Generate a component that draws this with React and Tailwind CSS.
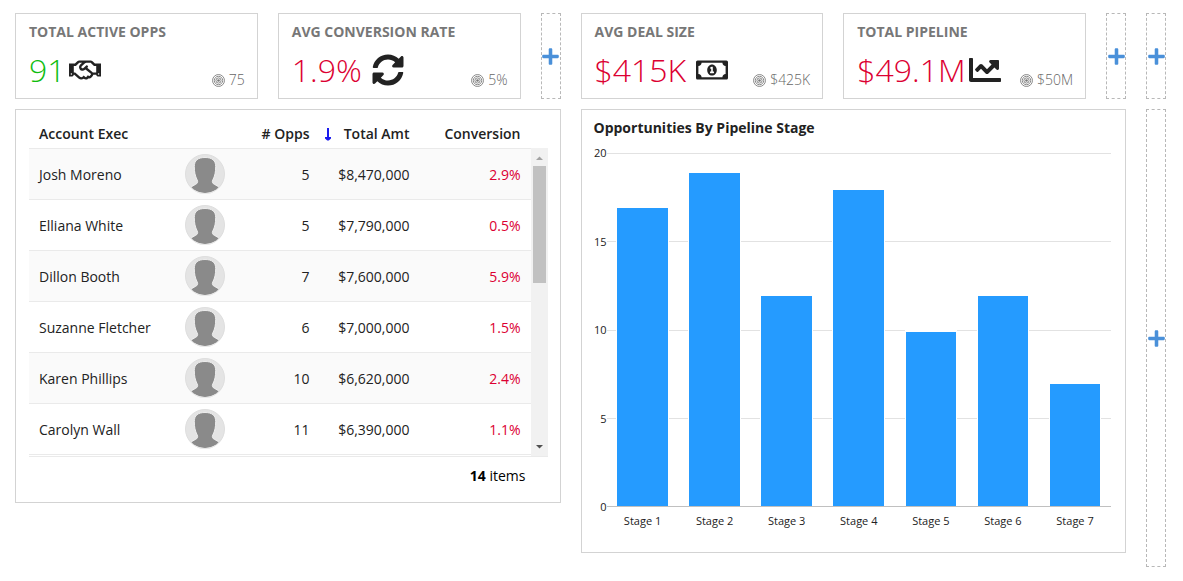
import React from "react";
import {
  FaChartLine,
  FaPlus,
  FaRegHandshake,
  FaRegMoneyBillAlt,
  FaSyncAlt,
} from "react-icons/fa";

const leftKpis = [
  { title: "TOTAL ACTIVE OPPS", value: "91", target: "75", icon: FaRegHandshake, good: true },
  { title: "AVG CONVERSION RATE", value: "1.9%", target: "5%", icon: FaSyncAlt, spaced: true },
];

const rightKpis = [
  { title: "AVG DEAL SIZE", value: "$415K", target: "$425K", icon: FaRegMoneyBillAlt, spaced: true },
  { title: "TOTAL PIPELINE", value: "$49.1M", target: "$50M", icon: FaChartLine },
];

const execs = [
  { name: "Josh Moreno", opps: 5, amount: 8470000, conversion: "2.9%" },
  { name: "Elliana White", opps: 5, amount: 7790000, conversion: "0.5%" },
  { name: "Dillon Booth", opps: 7, amount: 7600000, conversion: "5.9%" },
  { name: "Suzanne Fletcher", opps: 6, amount: 7000000, conversion: "1.5%" },
  { name: "Karen Phillips", opps: 10, amount: 6620000, conversion: "2.4%" },
  { name: "Carolyn Wall", opps: 11, amount: 6390000, conversion: "1.1%" },
];

const stages = [
  { name: "Stage 1", count: 17 },
  { name: "Stage 2", count: 19 },
  { name: "Stage 3", count: 12 },
  { name: "Stage 4", count: 18 },
  { name: "Stage 5", count: 10 },
  { name: "Stage 6", count: 12 },
  { name: "Stage 7", count: 7 },
];

const ticks = [20, 15, 10, 5, 0];
const maxCount = 20;

function TargetIcon() {
  return (
    <svg viewBox="0 0 12 12" className="size-[13px] shrink-0" fill="none" stroke="#777" aria-hidden="true">
      <circle cx="6" cy="6" r="5.5" strokeWidth="0.8" />
      <circle cx="6" cy="6" r="3.9" strokeWidth="0.8" />
      <circle cx="6" cy="6" r="2.4" strokeWidth="0.8" />
      <circle cx="6" cy="6" r="1.2" fill="#777" stroke="none" />
    </svg>
  );
}

function Avatar() {
  return (
    <svg viewBox="0 0 40 40" className="size-10 block" aria-hidden="true">
      <defs>
        <clipPath id="avatar-clip">
          <circle cx="20" cy="20" r="19" />
        </clipPath>
      </defs>
      <circle cx="20" cy="20" r="19.5" fill="#e4e4e4" stroke="#dedede" strokeWidth="1" />
      <g clipPath="url(#avatar-clip)">
        <path
          d="M20 3.500c-7.200 0-10.700 3-10.700 9 0 5.500.8 9.500 2.900 13.500 1 2 .3 3.400-1.400 4.200L6 33l4 8h20l4-8-4.800-2.800c-1.700-.8-2.400-2.200-1.400-4.200 2.100-4 2.900-8 2.900-13.500 0-6-3.500-9-10.700-9z"
          fill="#8a8a8a"
          stroke="#eeeeee"
          strokeWidth="1"
        />
      </g>
      <path d="M9 36.300a19.500 19.500 0 0 0 22 0" fill="none" stroke="#e9e9e9" strokeWidth="1" />
    </svg>
  );
}

function KpiCard({ title, value, target, icon: Icon, good, spaced }) {
  return (
    <section className="flex-1 min-w-0 h-[86px] border border-[#d3d3d3] pr-3 pl-[13px] pt-2">
      <h2 className="text-sm leading-5 font-bold text-[#777] whitespace-nowrap">{title}</h2>
      <div className="flex items-center justify-between h-12 mt-1">
        <div className={`flex items-center ${spaced ? "gap-[10px]" : "gap-[3px]"}`}>
          <span className={`text-[32px] leading-10 font-light ${good ? "text-[#10bd10]" : "text-[#dc0032]"}`}>
            {value}
          </span>
          <Icon className="size-8 shrink-0 text-[#222]" aria-hidden="true" />
        </div>
        <div className="flex items-center gap-1 pt-5 text-sm leading-5 font-light text-[#666]">
          <TargetIcon />
          <span>{target}</span>
        </div>
      </div>
    </section>
  );
}

function AddSlot({ className = "h-[86px]" }) {
  return (
    <button
      type="button"
      aria-label="Add widget"
      className={`flex w-5 shrink-0 items-center justify-center border border-dashed border-[#b8b8b8] text-[#4a90d9] ${className}`}
    >
      <FaPlus className="size-[19px] shrink-0" />
    </button>
  );
}

function ScrollTrack() {
  return (
    <div className="flex w-[17px] shrink-0 flex-col items-center bg-[#f1f1f1]" aria-hidden="true">
      <svg viewBox="0 0 17 18" className="h-[18px] w-[17px]">
        <path d="M5 12h7L8.500 8.500z" fill="#a3a3a3" />
      </svg>
      <div className="h-[117px] w-[13px] bg-[#c1c1c1]" />
      <svg viewBox="0 0 17 17" className="mt-auto size-[17px]">
        <path d="M5 6h7L8.500 9.500z" fill="#505050" />
      </svg>
    </div>
  );
}

function ExecTable() {
  return (
    <section className="border border-[#d3d3d3] pr-3 pl-[13px] pt-2">
      <div className="flex border-b border-[#eaeaea]">
        <table className="flex-1 table-fixed border-collapse text-sm text-[#222] mb-px">
          <thead>
            <tr className="h-[30px] text-right leading-5">
              <th className="px-[10px] pt-[3px] text-left font-semibold">Account Exec</th>
              <th className="w-[60px]" aria-label="Photo" />
              <th className="w-[85px] px-[10px] pt-[3px] font-semibold whitespace-nowrap"># Opps</th>
              <th className="w-[100px] pt-[3px] pr-[10px] pl-1 font-semibold whitespace-nowrap">
                <span className="flex items-center justify-between">
                  <svg viewBox="0 0 8 13" className="h-[13px] w-2" fill="#1a1aee" aria-hidden="true">
                    <path d="M3 0h2v9h2v1.500L4.800 12.500H3.200L1 10.500V9h2z" />
                  </svg>
                  Total Amt
                </span>
              </th>
              <th className="w-[111px] px-[10px] pt-[3px] font-semibold">Conversion</th>
            </tr>
          </thead>
          <tbody>
            {execs.map((e) => (
              <tr key={e.name} className="h-[51px] border-y border-[#eaeaea] text-right odd:bg-[#fafafa]">
                <td className="px-[10px] pt-[2px] text-left">{e.name}</td>
                <td className="px-[10px]">
                  <Avatar />
                </td>
                <td className="px-[10px] pt-[2px]">{e.opps}</td>
                <td className="pt-[2px] pr-[10px]">${e.amount.toLocaleString("en-US")}</td>
                <td className="px-[10px] pt-[2px] text-[#dc0032]">{e.conversion}</td>
              </tr>
            ))}
          </tbody>
        </table>
        <div className="flex pt-[30px]">
          <ScrollTrack />
        </div>
      </div>
      <p className="pt-[9px] pr-[22px] pb-4 text-right text-sm leading-5 text-black">
        <b>14</b> items
      </p>
    </section>
  );
}

function StageChart() {
  return (
    <section className="border border-[#d3d3d3] px-3 pt-2 pb-[23px] text-[#222]">
      <h2 className="text-sm leading-5 font-bold">Opportunities By Pipeline Stage</h2>
      <div className="mt-[15px] mr-[2px] flex text-[11px] leading-4">
        <div className="-my-2 flex h-[370px] w-[13px] shrink-0 flex-col justify-between text-right">
          {ticks.map((t) => (
            <span key={t}>{t}</span>
          ))}
        </div>
        <div className="min-w-0 flex-1">
          <div className="relative h-[354px]">
            <div className="absolute inset-0 flex flex-col justify-between">
              {ticks.map((t) => (
                <div key={t} className={`h-px ${t === 0 ? "bg-[#c0c0c0]" : "bg-[#e2e2e2]"}`} />
              ))}
            </div>
            <div className="relative flex h-[353px] items-end">
              {stages.map((s) => (
                <div key={s.name} className="flex h-full flex-1 items-end justify-center">
                  <div
                    className="w-[73%] border border-t-2 border-b-0 border-white bg-[#259bff]"
                    style={{ height: `${(s.count / maxCount) * 100}%` }}
                  />
                </div>
              ))}
            </div>
          </div>
          <div className="mt-[6px] flex text-center">
            {stages.map((s) => (
              <span key={s.name} className="flex-1">
                {s.name}
              </span>
            ))}
          </div>
        </div>
      </div>
    </section>
  );
}

export default function App() {
  return (
    <main className="flex min-h-screen gap-5 bg-white pt-[13px] pr-[17px] pb-[14px] pl-[15px] font-['Open_Sans',sans-serif]">
      <div className="flex min-w-0 flex-1 flex-col gap-[10px]">
        <div className="flex gap-5">
          {leftKpis.map((k) => (
            <KpiCard key={k.title} {...k} />
          ))}
          <AddSlot />
        </div>
        <ExecTable />
      </div>
      <div className="flex min-w-0 flex-1 flex-col gap-[10px]">
        <div className="flex gap-5">
          {rightKpis.map((k) => (
            <KpiCard key={k.title} {...k} />
          ))}
          <AddSlot />
        </div>
        <StageChart />
      </div>
      <div className="flex flex-col gap-[10px]">
        <AddSlot />
        <AddSlot className="flex-1" />
      </div>
    </main>
  );
}
